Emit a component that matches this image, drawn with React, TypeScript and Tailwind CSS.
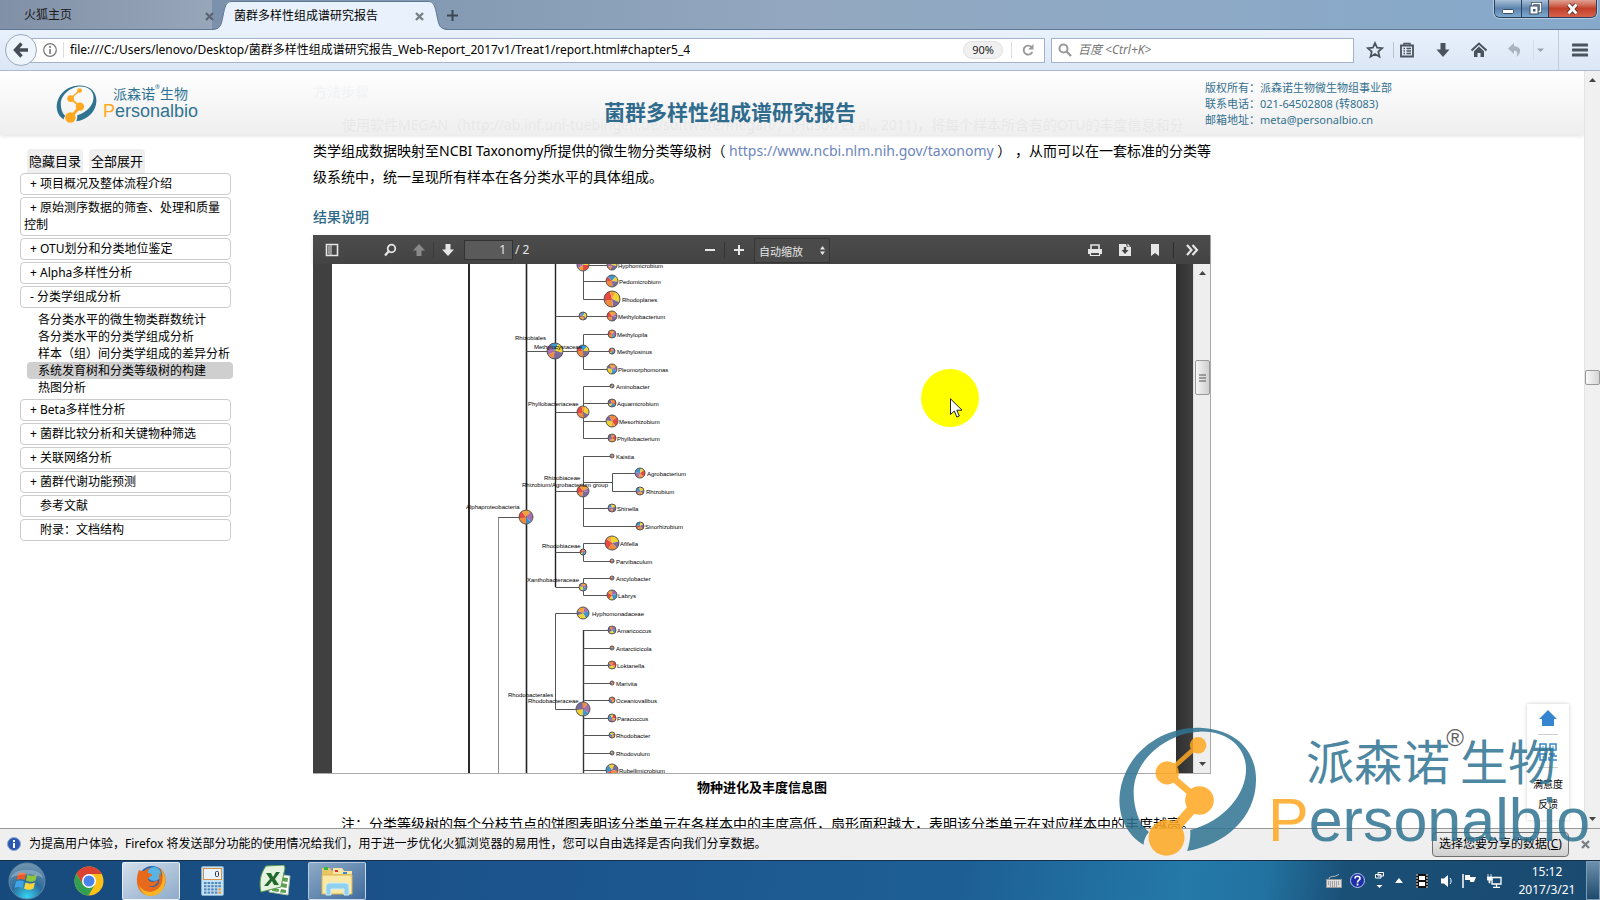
import { ReactNode } from 'react'

type TreeNode = { x: number; y: number; r: number; name?: string; tx?: number }

const PIE_COLORS = ['#e8483f', '#f5a13a', '#a770ad', '#3f96d0', '#f2d22e', '#7d6a9c', '#f08a3c']

const leaves: TreeNode[] = [
  { x: 612, y: 265, r: 5, name: 'Hyphomicrobium', tx: 618 },
  { x: 612, y: 281, r: 6, name: 'Pedomicrobium', tx: 619 },
  { x: 612, y: 299, r: 8, name: 'Rhodoplanes', tx: 622 },
  { x: 612, y: 316, r: 5, name: 'Methylobacterium', tx: 618 },
  { x: 612, y: 334, r: 4, name: 'Methylopila', tx: 617 },
  { x: 612, y: 351, r: 3, name: 'Methylosinus', tx: 617 },
  { x: 612, y: 369, r: 5, name: 'Pleomorphomonas', tx: 618 },
  { x: 612, y: 386, r: 2, name: 'Aminobacter', tx: 616 },
  { x: 612, y: 403, r: 4, name: 'Aquamicrobium', tx: 617 },
  { x: 612, y: 421, r: 6, name: 'Mesorhizobium', tx: 619 },
  { x: 612, y: 438, r: 4, name: 'Phyllobacterium', tx: 617 },
  { x: 612, y: 456, r: 2, name: 'Kaistia', tx: 616 },
  { x: 640, y: 473, r: 5, name: 'Agrobacterium', tx: 647 },
  { x: 640, y: 491, r: 4, name: 'Rhizobium', tx: 646 },
  { x: 612, y: 508, r: 4, name: 'Shinella', tx: 617 },
  { x: 640, y: 526, r: 4, name: 'Sinorhizobium', tx: 645 },
  { x: 612, y: 543, r: 7, name: 'Afifella', tx: 620 },
  { x: 612, y: 561, r: 2, name: 'Parvibaculum', tx: 616 },
  { x: 612, y: 578, r: 2, name: 'Ancylobacter', tx: 616 },
  { x: 612, y: 595, r: 5, name: 'Labrys', tx: 618 },
  { x: 583, y: 613, r: 6, name: 'Hyphomonadaceae', tx: 592 },
  { x: 612, y: 630, r: 4, name: 'Amaricoccus', tx: 617 },
  { x: 612, y: 648, r: 2, name: 'Antarcticicola', tx: 616 },
  { x: 612, y: 665, r: 4, name: 'Loktanella', tx: 617 },
  { x: 612, y: 683, r: 2, name: 'Marivita', tx: 616 },
  { x: 612, y: 700, r: 3, name: 'Oceaniovalibus', tx: 616 },
  { x: 612, y: 718, r: 4, name: 'Paracoccus', tx: 617 },
  { x: 612, y: 735, r: 3, name: 'Rhodobacter', tx: 616 },
  { x: 612, y: 753, r: 2, name: 'Rhodovulum', tx: 616 },
  { x: 612, y: 770, r: 6, name: 'Rubellimicrobium', tx: 619 },
]

const branches: TreeNode[] = [
  { x: 583, y: 265, r: 6 },
  { x: 583, y: 316, r: 4 },
  { x: 555, y: 351, r: 8 },
  { x: 583, y: 351, r: 6 },
  { x: 583, y: 412, r: 6 },
  { x: 583, y: 491, r: 6 },
  { x: 526, y: 517, r: 7 },
  { x: 583, y: 552, r: 3 },
  { x: 583, y: 587, r: 4 },
  { x: 583, y: 709, r: 7 },
]

const branchLabels = [
  { x: 515, y: 340, text: 'Rhizobiales' },
  { x: 534, y: 349, text: 'Methylocystaceae' },
  { x: 528, y: 406, text: 'Phyllobacteriaceae' },
  { x: 544, y: 480, text: 'Rhizobiaceae' },
  { x: 522, y: 487, text: 'Rhizobium/Agrobacterium group' },
  { x: 466, y: 509, text: 'Alphaproteobacteria' },
  { x: 542, y: 548, text: 'Rhodobiaceae' },
  { x: 527, y: 582, text: 'Xanthobacteraceae' },
  { x: 508, y: 697, text: 'Rhodobacterales' },
  { x: 528, y: 703, text: 'Rhodobacteraceae' },
]

const treeLines =
  'M583 265H612 M583 264V299 M583 281H612 M583 299H612 M555 316H612 M526 351H612 M583 334V369 M583 334H612 M583 369H612 ' +
  'M555 412H583 M583 386V438 M583 386H612 M583 403H612 M583 421H612 M583 438H612 ' +
  'M555 491H583 M583 456V526 M583 456H612 M583 482H612 M612 473V491 M612 473H640 M612 491H640 M583 508H612 M583 526H640 ' +
  'M555 552H583 M583 543V561 M583 543H612 M583 561H612 M555 587H583 M583 578V595 M583 578H612 M583 595H612 ' +
  'M498 517H526 M555 613H583 M555 613V709 M555 709H583 ' +
  'M583 630H612 M583 648H612 M583 665H612 M583 683H612 M583 700H612 M583 718H612 M583 735H612 M583 753H612 M583 770H612'

function Pie({ x, y, r, seed }: TreeNode & { seed: number }) {
  const shares = [0.24, 0.16, 0.22, 0.26, 0.12]
  let start = seed * 1.3
  return (
    <g>
      {shares.map((share, i) => {
        const from = start
        const to = start + share * Math.PI * 2
        start = to
        return (
          <path
            key={i}
            d={`M${x} ${y}L${x + r * Math.cos(from)} ${y + r * Math.sin(from)}A${r} ${r} 0 0 1 ${x + r * Math.cos(to)} ${y + r * Math.sin(to)}Z`}
            fill={PIE_COLORS[(i + seed) % PIE_COLORS.length]}
          />
        )
      })}
      <circle cx={x} cy={y} r={r} fill="none" stroke="#555" />
    </g>
  )
}

function TaxonomyTree() {
  return (
    <svg width="844" height="509" viewBox="332 264 844 509" className="block" aria-label="物种进化及丰度信息图">
      <path d="M469 264V773" stroke="#2b2b2b" strokeWidth="2" />
      <path d="M498.5 517V773" stroke="#8a8a8a" />
      <path d="M526.5 264V773" stroke="#222" strokeWidth="1.6" />
      <path d="M555.5 264V587" stroke="#222" strokeWidth="1.4" />
      <path d="M583.5 630V773" stroke="#333" strokeWidth="1.4" />
      <path d={treeLines} stroke="#555" fill="none" transform="translate(.5 .5)" />
      {branches.map((n, i) => (
        <Pie key={i} {...n} seed={i} />
      ))}
      {leaves.map((n, i) => (
        <Pie key={i} {...n} seed={i + 2} />
      ))}
      <g fontFamily="Liberation Sans, sans-serif" fontSize="6" fill="#000">
        {leaves.map((n) => (
          <text key={n.name} x={n.tx} y={n.y + 3}>{n.name}</text>
        ))}
        {branchLabels.map((l) => (
          <text key={l.text} x={l.x} y={l.y}>{l.text}</text>
        ))}
      </g>
    </svg>
  )
}

function LogoMark({ className }: { className: string }) {
  return (
    <svg viewBox="112 108 424 392" className={className} aria-hidden="true">
      <path
        d="M192 464C122 424 98 330 140 242C188 146 290 106 370 113C470 119 531 182 530 270C529 384 436 464 323 483C330 462 334 440 332 420C436 392 500 312 500 237C500 168 440 122 362 124C268 126 163 204 162 305C162 354 178 404 208 426C198 438 192 452 192 464Z"
        fill="#2f7391"
      />
      <g stroke="#ffa820" fill="#ffa820">
        <path d="M356 165L263 248" strokeWidth="14" />
        <path d="M263 248L360 331" strokeWidth="20" />
        <path d="M360 331L261 443" strokeWidth="30" />
        <g stroke="none">
          <circle cx="356" cy="165" r="25" />
          <circle cx="263" cy="248" r="35" />
          <circle cx="360" cy="331" r="43" />
          <circle cx="261" cy="443" r="54" />
        </g>
      </g>
    </svg>
  )
}

function CloseX({ className = 'text-[#7a7f86]' }: { className?: string }) {
  return (
    <svg width="9" height="9" viewBox="0 0 9 9" className={className}>
      <path d="M1 1L8 8M8 1L1 8" stroke="currentColor" strokeWidth="2.4" />
    </svg>
  )
}

function TabBar() {
  return (
    <div className="flex h-[30px] shrink-0 items-end border-b border-[#5f7893] bg-linear-to-r from-[#7389a4] via-[#93a8c0] to-[#86a9cb]">
      <div className="flex h-full w-[212px] items-center justify-between bg-linear-to-r from-[#8090a6] to-[#97a6ba] pl-6">
        <button className="text-xs text-[#1a1a1a]">火狐主页</button>
        <button aria-label="关闭标签页" className="mt-1 -mr-[2px]"><CloseX className="text-[#5c6570]" /></button>
      </div>
      <div className="-mb-px flex h-[29px] items-stretch">
        <svg width="20" height="29" viewBox="0 0 20 29">
          <path d="M0 29C9 28 9 24 11 15C13 5 14 0 20 0V29Z" fill="#e8f1fc" />
          <path d="M0 28.5C9 28 9 24 11 15C13 5 14 .5 20 .5" fill="none" stroke="#5f7893" />
        </svg>
        <div className="flex w-[196px] items-center justify-between border-t border-[#5f7893] bg-[#e8f1fc] pl-[2px] pr-1">
          <button className="text-xs text-black">菌群多样性组成谱研究报告</button>
          <button aria-label="关闭标签页"><CloseX /></button>
        </div>
        <svg width="20" height="29" viewBox="0 0 20 29">
          <path d="M20 29C11 28 11 24 9 15C7 5 6 0 0 0V29Z" fill="#e8f1fc" />
          <path d="M20 28.5C11 28 11 24 9 15C7 5 6 .5 0 .5" fill="none" stroke="#5f7893" />
        </svg>
      </div>
      <button aria-label="新建标签页" className="mb-2 -ml-px">
        <svg width="11" height="11" viewBox="0 0 11 11"><path d="M5.500 0V11M0 5.500H11" stroke="#3c4650" strokeWidth="2" /></svg>
      </button>
      <div className="mr-[3px] ml-auto flex h-[18px] self-start overflow-hidden rounded-b-md border border-t-0 border-[#27405e] ring-1 ring-white/40">
        <button aria-label="最小化" className="flex w-[27px] items-center justify-center border-r border-[#27405e] bg-linear-to-b from-[#a9c0d8] via-[#5d84ae] to-[#7fa9d0]">
          <svg width="12" height="12" viewBox="0 0 12 12"><rect x=".5" y="6.500" width="11" height="4" rx="1" fill="#fff" stroke="#3b4b60" /></svg>
        </button>
        <button aria-label="还原" className="flex w-[27px] items-center justify-center border-r border-[#27405e] bg-linear-to-b from-[#a9c0d8] via-[#5d84ae] to-[#7fa9d0]">
          <svg width="14" height="14" viewBox="0 0 14 14" fill="none">
            <rect x="4.500" y="1.500" width="8" height="8" stroke="#3b4b60" strokeWidth="3" /><rect x="4.500" y="1.500" width="8" height="8" stroke="#fff" strokeWidth="1.500" />
            <rect x="2" y="4" width="8" height="8" fill="#fff" stroke="#3b4b60" /><rect x="5" y="7" width="2.500" height="2.500" fill="#3b5b82" />
          </svg>
        </button>
        <button aria-label="关闭" className="flex w-[47px] items-center justify-center bg-linear-to-b from-[#e0a294] via-[#c2402a] to-[#d9614a]">
          <svg width="13" height="12" viewBox="0 0 13 12"><path d="M2.500 1.500L10.500 10.500M10.500 1.500L2.500 10.500" stroke="#5a2a25" strokeWidth="4.500" /><path d="M2.500 1.500L10.500 10.500M10.500 1.500L2.500 10.500" stroke="#fff" strokeWidth="2.800" /></svg>
        </button>
      </div>
    </div>
  )
}

function ToolIcon({ label, children }: { label: string; children: ReactNode }) {
  return (
    <button aria-label={label} className="flex w-9 items-center justify-center">
      <svg width="18" height="18" viewBox="0 0 18 18" fill="none" stroke="#4a525c">{children}</svg>
    </button>
  )
}

function NavBar() {
  return (
    <div className="flex h-[41px] shrink-0 items-center border-b border-[#a9bbd3] bg-linear-to-b from-[#e8f1fc] to-[#dce7f6] pl-[5px]">
      <button aria-label="后退" className="relative z-10 -mr-4 flex size-8 items-center justify-center rounded-full border border-[#9aa9bc] bg-[#eef4fc]">
        <svg width="16" height="16" viewBox="0 0 16 16"><path d="M8.500 1.500L2.500 8L8.500 14.500M3 8H15" fill="none" stroke="#454e58" strokeWidth="3.400" /></svg>
      </button>
      <div className="flex h-[25px] flex-1 items-center border border-[#a4b3cb] bg-white pl-[21px]">
        <svg width="14" height="14" viewBox="0 0 14 14" className="shrink-0">
          <circle cx="7" cy="7" r="6.300" fill="none" stroke="#777" strokeWidth="1.200" /><path d="M7 3V5M7 6V11" stroke="#777" strokeWidth="1.600" />
        </svg>
        <span className="mx-[6px] h-4 w-px bg-[#ddd]" />
        <input
          aria-label="地址"
          className="min-w-0 flex-1 text-xs text-black outline-none"
          defaultValue="file:///C:/Users/lenovo/Desktop/菌群多样性组成谱研究报告_Web-Report_2017v1/Treat1/report.html#chapter5_4"
        />
        <button className="h-[18px] rounded-full border border-[#e2e2e2] bg-[#f0f0f0] px-2 text-[11px] leading-4 text-[#222]">90%</button>
        <span className="ml-2 h-4 w-px bg-[#ddd]" />
        <button aria-label="重新加载" className="w-8">
          <svg width="12" height="12" viewBox="0 0 12 12" className="mx-auto"><path d="M9.500 3A4.500 4.500 0 1 0 10.300 8" fill="none" stroke="#9a9a9a" strokeWidth="1.900" /><path d="M11.500 0V5.500H6Z" fill="#9a9a9a" /></svg>
        </button>
      </div>
      <div className="ml-[6px] flex h-[25px] w-[303px] items-center border border-[#a4b3cb] bg-white pl-[6px]">
        <svg width="14" height="14" viewBox="0 0 14 14"><circle cx="5.500" cy="5.500" r="4" fill="none" stroke="#999" strokeWidth="2" /><path d="M8.500 8.500L13 13" stroke="#999" strokeWidth="2.400" /></svg>
        <input aria-label="搜索" placeholder="百度 <Ctrl+K>" className="ml-[6px] min-w-0 flex-1 text-xs italic outline-none placeholder:text-[#777]" />
      </div>
      <div className="ml-[3px] flex h-full items-center">
        <ToolIcon label="收藏"><path d="M9 2L11.100 6.700L16.200 7.200L12.300 10.600L13.500 15.700L9 13L4.500 15.700L5.700 10.600L1.800 7.200L6.900 6.700Z" strokeWidth="1.700" /></ToolIcon>
        <span className="-mr-[5px] h-4 w-px bg-[#b9c4d3]" />
        <ToolIcon label="书签"><path d="M3 4.500H15V15.500H3Z" strokeWidth="1.800" /><path d="M6 4V2.500H12V4M5.500 7.500H7M8.500 7.500H13M5.500 10H7M8.500 10H13M5.500 12.500H7M8.500 12.500H13" strokeWidth="1.400" /></ToolIcon>
        <ToolIcon label="下载"><path d="M6.500 2H11.500V8.500H15.500L9 16L2.500 8.500H6.500Z" fill="#4a525c" stroke="none" /></ToolIcon>
        <ToolIcon label="主页"><path d="M1.500 9.500L9 2.500L16.500 9.500" strokeWidth="2" /><path d="M4 10.200L9 5.600L14 10.200V16H10.500V12H7.500V16H4Z" fill="#4a525c" stroke="none" /></ToolIcon>
        <ToolIcon label="撤销"><path d="M8 2L2 7.500L8 13V9.700C11.500 9.500 12 12 10.500 16C16 12 15.500 5.500 8 5.300Z" fill="#a9b2bf" stroke="none" /></ToolIcon>
        <span className="-mr-[12px] h-5 w-px bg-[#d3dcea]" />
        <ToolIcon label="更多"><path d="M6 7.500H13L9.500 11Z" fill="#9aa3af" stroke="none" /></ToolIcon>
        <span className="h-full w-px bg-[#c0cbdb]" />
        <button aria-label="打开菜单" className="flex w-[41px] justify-center">
          <svg width="16" height="14" viewBox="0 0 16 14"><path d="M1 2H15M1 7H15M1 12H15" stroke="#4a525c" strokeWidth="3" strokeLinecap="round" /></svg>
        </button>
      </div>
    </div>
  )
}

function PageHeader() {
  return (
    <header className="absolute inset-x-0 top-0 z-10 flex h-16 bg-linear-to-b from-white/96 to-[#eeeeee]/96 shadow-[0_1px_4px_rgba(0,0,0,0.12)]">
      <div className="flex w-[313px] items-start pt-[14px] pl-14">
        <LogoMark className="h-[38px] w-[41px]" />
        <div className="ml-[6px] flex flex-col pt-px whitespace-nowrap text-[#2f7391]">
          <span className="flex pl-[10px] text-sm leading-4">派森诺<sup className="text-[6px] leading-2">®</sup>生物</span>
          <span className="font-['Liberation_Sans'] text-lg leading-[18px]"><span className="text-[#ffa820]">P</span>ersonalbio</span>
        </div>
      </div>
      <div className="flex flex-1 justify-center pt-[25px] pr-[58px]">
        <h1 className="text-[21px] leading-8 font-bold text-[#2f6b8d]">菌群多样性组成谱研究报告</h1>
      </div>
      <address className="w-[379px] pt-[9px] text-[11px] leading-4 text-[#34708f] not-italic">
        <p>版权所有：派森诺生物微生物组事业部</p>
        <p>联系电话：021-64502808 (转8083)</p>
        <p>邮箱地址：meta@personalbio.cn</p>
      </address>
    </header>
  )
}

const chaptersBefore = ['+ 项目概况及整体流程介绍', '+ 原始测序数据的筛查、处理和质量控制', '+ OTU划分和分类地位鉴定', '+ Alpha多样性分析', '- 分类学组成分析']
const sections = ['各分类水平的微生物类群数统计', '各分类水平的分类学组成分析', '样本（组）间分类学组成的差异分析', '系统发育树和分类等级树的构建', '热图分析']
const chaptersAfter = ['+ Beta多样性分析', '+ 菌群比较分析和关键物种筛选', '+ 关联网络分析', '+ 菌群代谢功能预测', '参考文献', '附录：文档结构']

function ChapterList({ items }: { items: string[] }) {
  return (
    <ul className="flex flex-col gap-[2px]">
      {items.map((item) => (
        <li key={item} className="rounded border border-[#ccc] bg-white px-[3px] pt-px pb-[2px] leading-[17px]">
          <a href="#chapter" className={/^[+-]/.test(item) ? 'block indent-[6px]' : 'block indent-4'}>{item}</a>
        </li>
      ))}
    </ul>
  )
}

function Sidebar() {
  return (
    <nav className="w-[313px] shrink-0 pt-[78px] pl-5 text-xs text-black">
      <div className="w-[211px]">
        <div className="flex gap-[6px] pl-[7px] text-[13px] leading-6">
          <button className="rounded-t bg-[#efefef] px-[2px]">隐藏目录</button>
          <button className="rounded-t bg-[#efefef] px-[2px]">全部展开</button>
        </div>
        <ChapterList items={chaptersBefore} />
        <ul className="-mr-[2px] ml-[7px] pt-[3px] pb-[3px] leading-[17px]">
          {sections.map((s, i) => (
            <li key={s} className={i === 3 ? 'rounded bg-[#cfcfcf] pl-[11px]' : 'pl-[11px]'}>
              <a href="#section" className="whitespace-nowrap">{s}</a>
            </li>
          ))}
        </ul>
        <ChapterList items={chaptersAfter} />
      </div>
    </nav>
  )
}

function PdfButton({ label, dim, width = 'w-7', children }: { label: string; dim?: boolean; width?: string; children: ReactNode }) {
  return (
    <button aria-label={label} className={`flex ${width} items-center justify-center ${dim ? 'text-[#8a8a8a]' : 'text-[#e6e6e6]'}`}>
      <svg width="16" height="16" viewBox="0 0 16 16" fill="none" stroke="currentColor">{children}</svg>
    </button>
  )
}

function PdfViewer() {
  return (
    <div className="border-r border-b border-[#aaa]">
      <div className="flex h-[29px] items-center bg-linear-to-b from-[#4c4c4c] to-[#434343] pl-[5px] text-[#e6e6e6] shadow">
        <PdfButton label="切换侧栏"><path d="M2.500 2.500H13.500V13.500H2.500Z" strokeWidth="1.600" /><path d="M4 3.500H6V12.500H4Z" fill="#999" stroke="none" /><path d="M7 3V13" /></PdfButton>
        <PdfButton label="查找" width="ml-[30px] w-7"><circle cx="9.500" cy="6.500" r="3.800" strokeWidth="1.800" /><path d="M6.800 9.200L3 13.500" strokeWidth="2.300" /></PdfButton>
        <PdfButton label="上一页" dim width="ml-px w-7"><path d="M8 2L14 8.500H10.500V14H5.500V8.500H2Z" fill="currentColor" stroke="none" /></PdfButton>
        <span className="h-4 w-px bg-[#3a3a3a]" />
        <PdfButton label="下一页"><path d="M8 14L14 7.500H10.500V2H5.500V7.500H2Z" fill="currentColor" stroke="none" /></PdfButton>
        <input aria-label="页码" defaultValue="1" className="ml-[2px] h-5 w-[49px] border border-[#333] bg-[#5a5a5a] pr-[6px] text-right text-xs outline-none" />
        <span className="ml-[2px] w-4 text-xs whitespace-nowrap">/ 2</span>
        <PdfButton label="缩小" width="ml-[165px] w-7"><path d="M3 8H13" strokeWidth="2" /></PdfButton>
        <span className="h-4 w-px bg-[#333]" />
        <PdfButton label="放大"><path d="M3 8H13M8 3V13" strokeWidth="2" /></PdfButton>
        <div className="relative ml-px self-end">
          <select aria-label="缩放" className="h-[25px] w-[76px] appearance-none border border-[#363636] bg-[#4a4a4a] pl-1 text-[11px] outline-none">
            <option>自动缩放</option>
          </select>
          <svg width="5" height="9" viewBox="0 0 5 9" className="pointer-events-none absolute top-2 right-[5px]"><path d="M0 3.500L2.500 0L5 3.500ZM0 5.500L2.500 9L5 5.500Z" fill="#e6e6e6" /></svg>
        </div>
        <div className="ml-auto flex items-center">
          <PdfButton label="打印" width="w-[30px]"><path d="M4 7V3H12V7" strokeWidth="1.600" /><path d="M1 7H15V12H13V10H3V12H1Z" fill="currentColor" stroke="none" /><path d="M3.500 10.500H12.500V13.500H3.500Z" strokeWidth="1.200" /></PdfButton>
          <PdfButton label="下载" width="w-[30px]"><path d="M2 2H9L10 5H14V14H2Z" fill="currentColor" stroke="none" /><path d="M10.500 1.500L13.500 4.500H10.500Z" fill="currentColor" stroke="none" /><path d="M6.800 5H9.200V8H11.500L8 12L4.500 8H6.800Z" stroke="none" fill="#444" /></PdfButton>
          <PdfButton label="书签" width="w-[30px]"><path d="M4 2H12V14L8 11L4 14Z" fill="currentColor" stroke="none" /></PdfButton>
          <span className="ml-[3px] h-4 w-px bg-[#2e2e2e]" />
          <PdfButton label="更多工具" width="w-[36px]"><path d="M3 3L7.500 8L3 13M8.500 3L13 8L8.500 13" strokeWidth="2.200" /></PdfButton>
        </div>
      </div>
      <div className="flex bg-[#404040] pl-[19px]">
        <div className="min-w-0 flex-1 overflow-hidden bg-white"><TaxonomyTree /></div>
        <div className="w-[17px] bg-linear-to-r from-[#2f2f2f] to-[#404040]" />
        <div className="flex w-[17px] flex-col items-center border-l border-[#ddd] bg-[#eee] py-[7px]">
          <svg width="7" height="4" viewBox="0 0 7 4"><path d="M0 4L3.500 0L7 4Z" fill="#444" /></svg>
          <div className="mt-[85px] flex h-[35px] w-[15px] items-center justify-center rounded-xs border border-[#999] bg-linear-to-r from-[#f5f5f5] to-[#cfcfcf]">
            <svg width="7" height="8" viewBox="0 0 7 8"><path d="M0 1H7M0 4H7M0 7H7" stroke="#555" /></svg>
          </div>
          <svg width="7" height="4" viewBox="0 0 7 4" className="mt-auto"><path d="M0 0L3.500 4L7 0Z" fill="#444" /></svg>
        </div>
      </div>
    </div>
  )
}

function Report() {
  return (
    <main className="mr-[373px] min-w-0 flex-1 pt-2 text-sm leading-[26px] text-black">
      <h2 className="font-medium text-[#2f6a87]">方法步骤</h2>
      <p className="mt-[7px] whitespace-nowrap">
        <span className="ml-[29px]">使用软件MEGAN（http://ab.inf.uni-tuebingen.de/software/megan/）(Huson et al., 2011)，将每个样本所含有的OTU的丰度信息和分</span><br />
        类学组成数据映射至NCBI Taxonomy所提供的微生物分类等级树（ <a href="https://www.ncbi.nlm.nih.gov/taxonomy" className="text-[#6c86bd]">https://www.ncbi.nlm.nih.gov/taxonomy</a> ） ，从而可以在一套标准的分类等<br />
        级系统中，统一呈现所有样本在各分类水平的具体组成。
      </p>
      <h2 className="mt-[14px] mb-[5px] font-medium text-[#2f6a87]">结果说明</h2>
      <PdfViewer />
      <p className="text-center text-[13px] font-bold">物种进化及丰度信息图</p>
      <p className="mt-[11px] pl-7 whitespace-nowrap">注：分类等级树的每个分枝节点的饼图表明该分类单元在各样本中的丰度高低，扇形面积越大，表明该分类单元在对应样本中的丰度越高。</p>
    </main>
  )
}

function PageScrollbar() {
  return (
    <div className="flex w-4 shrink-0 flex-col items-center justify-between border-l border-[#e3e3e3] bg-[#f0f0f0] py-[7px]">
      <svg width="7" height="4" viewBox="0 0 7 4"><path d="M0 4L3.500 0L7 4Z" fill="#444" /></svg>
      <div className="-mt-36 h-[15px] w-[15px] rounded-xs border border-[#999] bg-linear-to-r from-[#f8f8f8] to-[#d5d5d5]" />
      <svg width="7" height="4" viewBox="0 0 7 4"><path d="M0 0L3.500 4L7 0Z" fill="#444" /></svg>
    </div>
  )
}

function FloatingTools() {
  return (
    <div className="absolute right-[15px] bottom-2 z-10 flex w-[42px] flex-col items-center bg-white pt-[6px] pb-[6px] text-[10px] leading-5 text-black shadow-[0_0_4px_rgba(0,0,0,0.2)]">
      <a href="#top" aria-label="返回顶部">
        <svg width="18" height="16" viewBox="0 0 18 16"><path d="M9 0L18 9H15V16H3V9H0Z" fill="#3585d0" /></svg>
      </a>
      <span className="my-2 h-px w-5 bg-[#ccc]" />
      <svg width="18" height="18" viewBox="0 0 18 18" fill="none" stroke="#3585d0" strokeWidth="1.500">
        <path d="M1 1H7V7H1ZM11 1H17V7H11ZM1 11H7V17H1ZM3.500 4H4.500M13.500 4H14.500M3.500 14H4.500M10 11H13V14M15 10V13H18M10 14V17H12M14 17H18" />
      </svg>
      <span className="my-[6px] h-px w-5 bg-[#ccc]" />
      <a href="#feedback" className="text-center">满意度<br />反馈</a>
    </div>
  )
}

function NoticeBar() {
  return (
    <div className="flex h-8 shrink-0 items-center border-t border-[#999] bg-[#efefef] pr-[10px] pb-px pl-[7px] text-xs text-black">
      <svg width="14" height="14" viewBox="0 0 14 14"><circle cx="7" cy="7" r="6.500" fill="#2b57b0" stroke="#8fa6cf" /><path d="M7 3V5M7 6V11" stroke="#fff" strokeWidth="2" /></svg>
      <p className="ml-2">为提高用户体验，Firefox 将发送部分功能的使用情况给我们，用于进一步优化火狐浏览器的易用性，您可以自由选择是否向我们分享数据。</p>
      <button className="ml-auto h-[25px] w-[137px] rounded-sm border border-[#707070] bg-linear-to-b from-[#f2f2f2] to-[#cfcfcf] whitespace-nowrap">选择您要分享的数据(<u>C</u>)</button>
      <button aria-label="关闭通知" className="ml-3"><CloseX /></button>
    </div>
  )
}

function Taskbar() {
  return (
    <footer className="flex h-10 shrink-0 items-center border-t border-[#14304a] bg-[linear-gradient(100deg,#174a7c_0%,#1c558e_35%,#1d5f94_60%,#2479a9_74%,#2272a0_79%,#1a4f76_84%,#1a4a70_100%)] pl-2 text-white">
      <button aria-label="开始" className="w-[38px]">
        <svg width="38" height="38" viewBox="0 0 38 38">
          <defs>
            <radialGradient id="orb" cx=".5" cy=".95" r=".9"><stop offset="0" stopColor="#35d6f5" /><stop offset=".5" stopColor="#2a6c9c" /><stop offset="1" stopColor="#6f93ae" /></radialGradient>
          </defs>
          <circle cx="19" cy="19" r="18" fill="url(#orb)" stroke="#5f86a3" />
          <path d="M10 12C13 10 15 10 18 12L16.500 18C14 16.500 11 16.500 8.500 18Z" fill="#ea5a24" />
          <path d="M19.500 12.500C23 14.500 26 14 29 12.500L27.500 18.500C24 20.500 21 20 18 18.500Z" fill="#8fc43d" />
          <path d="M8 19.500C11 18 13.500 18 16 19.500L14.500 26C12 24.500 9 24.500 6.500 26Z" fill="#3fa5e8" />
          <path d="M17.500 20.500C21 22 24 22 27 20.500L25.500 26.500C22 28.500 19 28 16 26.500Z" fill="#fbd43c" />
          <path d="M3 16C5 5 33 5 35 16C26 11 12 11 3 16Z" fill="#fff" opacity=".25" />
        </svg>
      </button>
      <button aria-label="Chrome" className="flex w-[76px] justify-center pl-[9px]">
        <svg width="30" height="30" viewBox="0 0 30 30">
          <circle cx="15" cy="15" r="14.500" fill="#fbc118" />
          <path d="M2.400 7.800A14.500 14.500 0 0 1 27.600 8H15L9 18.500Z" fill="#dc4232" />
          <path d="M2.400 7.800A14.500 14.500 0 0 0 14.500 29.500L21 18.500L15 22L9 18.500Z" fill="#31a053" />
          <circle cx="15" cy="15" r="7" fill="#fff" /><circle cx="15" cy="15" r="5.500" fill="#4a84ea" />
        </svg>
      </button>
      <button aria-label="Firefox" className="flex h-[38px] w-[58px] items-center justify-center rounded-xs border border-white/70 bg-linear-to-br from-[#d3dfeb] to-[#8eabc9]">
        <svg width="30" height="32" viewBox="0 0 30 32">
          <circle cx="16" cy="14" r="13" fill="#2468b4" /><circle cx="18" cy="9" r="7" fill="#58b4e4" />
          <path d="M3 5C5 6 6 6 8 6C10 4 12 3 14 3C12 5 11 7 12 8C14 8 16 9 16 10C15 12 12 12 12 14C13 17 17 18 20 16C22 15 23 17 21 18C19 22 14 22 12 20C15 24 22 22 23 17C24 13 22 9 24 8C25 9 26 11 26 13C27 8 24 4 22 2C30 6 31 17 28 22C22 34 6 33 2 22C0 16 1 10 3 5Z" fill="#e8691c" />
          <path d="M28 22C30 15 29 8 25 5C29 14 26 25 15 27C8 27 4 23 3 19C4 27 9 31 15 31C21 31 26 27 28 22Z" fill="#f9b423" />
        </svg>
      </button>
      <button aria-label="计算器" className="flex w-[64px] justify-center">
        <svg width="23" height="30" viewBox="0 0 23 30">
          <rect x=".5" y=".5" width="22" height="29" rx="1.500" fill="#c3dff2" stroke="#86aecb" />
          <rect x="2.500" y="2.500" width="18" height="11" fill="#eaf4ff" stroke="#d98f3f" /><rect x="14.500" y="5.500" width="3" height="5" rx="1" fill="none" stroke="#333" />
          {[0, 1, 2, 3].map((row) => [0, 1, 2, 3, 4].map((col) => (
            <rect key={`${row}-${col}`} x={3 + col * 3.6} y={16 + row * 3.2} width="2.500" height="2" fill={col === 4 && row > 1 ? '#f09a2c' : '#4f86b8'} />
          )))}
        </svg>
      </button>
      <button aria-label="Excel" className="flex w-[64px] justify-center pr-[3px]">
        <svg width="32" height="31" viewBox="0 0 32 31">
          <path d="M13 8L31 11L29 30L10 27Z" fill="#fff" stroke="#9fbf9a" />
          <path d="M22 12L29 13L28.500 17L22 16ZM22 18L28 19L27.500 23L22 22ZM22 24L27 25L27 28L21 27.500ZM13 23L20 24L19.500 27L13 26Z" fill="#5da052" />
          <path d="M7 1L25 0L26 3L22 22L2 27C0 18 1 9 7 1Z" fill="#e5f2df" stroke="#58994b" />
          <path d="M7 8H12L14 12L17 7H21L16 14L20 20H15L13 16L9 21H5L11 14Z" fill="#23682c" />
        </svg>
      </button>
      <button aria-label="资源管理器" className="flex h-[38px] w-[58px] items-center justify-center rounded-xs border border-white/60 bg-linear-to-br from-[#8fabc8] to-[#3f6c9c]">
        <svg width="34" height="30" viewBox="0 0 34 30">
          <path d="M2 2H10L12 5H32V26H2Z" fill="#e9c565" /><path d="M13 2H22L24 5H32V8H13Z" fill="#f7e6a5" />
          <path d="M4 1H8V4H4Z" fill="#38b54a" /><path d="M15 4H18V6H15Z" fill="#d33" /><path d="M23 6H27V8H23Z" fill="#3489d0" />
          <path d="M2 9H32V28H2Z" fill="#fae9a4" stroke="#d9b552" />
          <path d="M6 29V21C6 18 8 17 10 17H25C28 17 29 19 29 21V29H24V23H11V29Z" fill="#8fd0ef" stroke="#cfeefa" />
        </svg>
      </button>
      <div className="ml-auto flex h-full items-center">
        <div className="flex items-center gap-2">
          <svg width="16" height="14" viewBox="0 0 16 14"><rect x=".5" y="5.500" width="15" height="8" fill="#ddd" stroke="#999" /><path d="M2 8H14M2 10H14M4 12H12" stroke="#666" strokeDasharray="1 1" /><path d="M3 5C3 1 9 4 13 0" stroke="#bbb" fill="none" /></svg>
          <svg width="15" height="15" viewBox="0 0 15 15"><circle cx="7.500" cy="7.500" r="7" fill="#1c2fa8" stroke="#b9c4ee" /><path d="M5 5.500C5 2.500 10 2.500 10 5.500C10 7.300 7.500 7 7.500 9.500M7.500 10.500V12.500" fill="none" stroke="#fff" strokeWidth="1.700" /></svg>
          <svg width="9" height="20" viewBox="0 0 9 20" className="mx-[2px]"><path d="M3 1.500H8.500V5H3ZM.5 3.500H6V7H.5Z" fill="#1f4c70" stroke="#fff" /><path d="M1.500 14H7.500L4.500 17Z" fill="#fff" /></svg>
          <svg width="8" height="5" viewBox="0 0 8 5" className="mx-px"><path d="M0 5L4 0L8 5Z" fill="#fff" /></svg>
          <svg width="12" height="14" viewBox="0 0 12 14" className="mx-1"><path d="M0 0H12V14H0Z" fill="#111" /><path d="M3 2H9V6H3ZM3 8H9V12H3Z" fill="#fff" /><path d="M1 0V14M11 0V14" stroke="#fff" strokeDasharray="2 1" /></svg>
          <svg width="14" height="14" viewBox="0 0 14 14"><path d="M1 4.500H4L8 1V13L4 9.500H1Z" fill="#fff" /><path d="M10 4C11.500 6 11.500 8 10 10" stroke="#fff" fill="none" /></svg>
          <svg width="15" height="14" viewBox="0 0 15 14" className="mr-[2px]"><path d="M1 0V14" stroke="#fff" strokeWidth="1.500" /><path d="M3 1H8V3H14L12 8H8V6H3Z" fill="#fff" /></svg>
          <svg width="15" height="14" viewBox="0 0 15 14"><path d="M5 3.500H14V10H5ZM9.500 10V13M6 13.300H13" fill="none" stroke="#fff" strokeWidth="1.300" /><path d="M1 0V3M4 0V3M0 3H5V6H3V9H2V6H0Z" stroke="#fff" strokeWidth=".8" fill="#fff" /></svg>
        </div>
        <div className="w-[84px] pl-[6px] text-center text-xs leading-[18px]">
          <time className="block">15:12</time>
          <time className="block">2017/3/21</time>
        </div>
        <button aria-label="显示桌面" className="h-full w-[14px] border border-[#7c9bb5] bg-linear-to-b from-[#6d90ac] to-[#1d4a6c]" />
      </div>
    </footer>
  )
}

function Watermark() {
  return (
    <div className="pointer-events-none absolute right-0 bottom-[43px] z-20 flex w-[483px] opacity-85" aria-hidden="true">
      <LogoMark className="h-[131px] w-[141px] shrink-0" />
      <div className="flex flex-1 flex-col pt-2 pl-[10px] whitespace-nowrap text-[#2f7391]">
        <span className="flex pl-[38px] text-[48px] leading-[56px]">
          派森诺<span className="-mx-2 w-[26px] text-center font-['Liberation_Sans'] text-2xl leading-2 text-[#444]">®</span>生物
        </span>
        <span className="font-['Liberation_Sans'] text-[61px] leading-[60px]"><span className="text-[#ffa820]">P</span>ersonalbio</span>
      </div>
    </div>
  )
}

function Pointer() {
  return (
    <div className="pointer-events-none absolute top-[369px] left-[921px] z-20 size-[58px] rounded-full bg-[#ffff00]">
      <svg width="13" height="20" viewBox="0 0 13 20" className="absolute top-[29px] left-[29px]">
        <path d="M.5 .8V16.500L4.300 13L6.800 19L9.300 18L6.800 12.200H12Z" fill="#fff" stroke="#222" />
      </svg>
    </div>
  )
}

export default function App() {
  return (
    <div className="relative flex h-screen flex-col overflow-hidden bg-white font-['Noto_Sans','Noto_Sans_CJK_SC',sans-serif]">
      <TabBar />
      <NavBar />
      <div className="flex min-h-0 flex-1">
        <div className="relative flex min-w-0 flex-1 items-start overflow-hidden">
          <PageHeader />
          <Sidebar />
          <Report />
          <FloatingTools />
        </div>
        <PageScrollbar />
      </div>
      <NoticeBar />
      <Taskbar />
      <Watermark />
      <Pointer />
    </div>
  )
}
